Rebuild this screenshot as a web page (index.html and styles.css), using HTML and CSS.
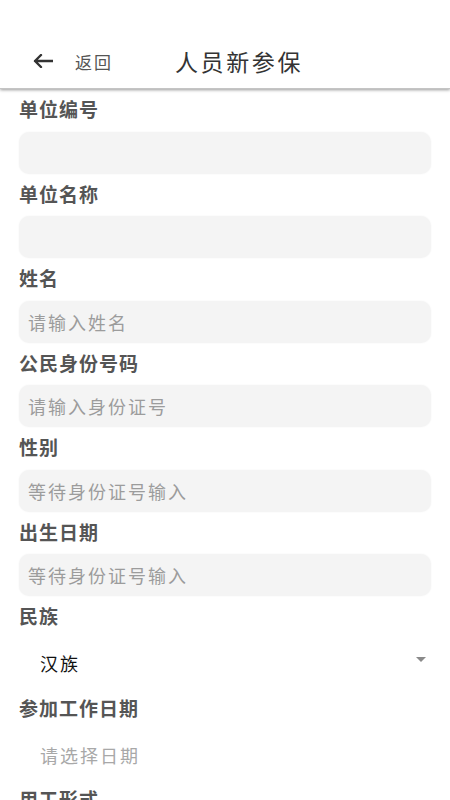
FILE: index.html
```html
<!DOCTYPE html>
<html lang="zh">
<head>
<meta charset="utf-8">
<title>人员新参保</title>
<link rel="stylesheet" href="styles.css">
</head>
<body>
<header class="topbar">
  <div class="back">
    <svg class="back-icon" width="20" height="14" viewBox="0 0 20 14"><path d="M19.5 7H2M8 1L2 7l6 6" fill="none" stroke="#333" stroke-width="2.4" stroke-linecap="round" stroke-linejoin="round"/></svg>
    <span class="back-text">返回</span>
  </div>
  <h1 class="title">人员新参保</h1>
</header>
<main class="form">
  <div class="label">单位编号</div>
  <div class="input"></div>
  <div class="label">单位名称</div>
  <div class="input"></div>
  <div class="label">姓名</div>
  <div class="input placeholder">请输入姓名</div>
  <div class="label">公民身份号码</div>
  <div class="input placeholder">请输入身份证号</div>
  <div class="label">性别</div>
  <div class="input placeholder">等待身份证号输入</div>
  <div class="label">出生日期</div>
  <div class="input placeholder">等待身份证号输入</div>
  <div class="label">民族</div>
  <div class="select">
    <span class="select-value">汉族</span>
    <span class="caret"></span>
  </div>
  <div class="label">参加工作日期</div>
  <div class="date">请选择日期</div>
  <div class="label">用工形式</div>
</main>
</body>
</html>
```

FILE: styles.css
```css
html, body {
  margin: 0;
  padding: 0;
  background: #fff;
}
body {
  font-family: "Noto Sans CJK SC", "Noto Sans", sans-serif;
  width: 450px;
  overflow: hidden;
}
.topbar {
  position: relative;
  z-index: 2;
  height: 89px;
  box-sizing: border-box;
  padding: 34px 0 0 33px;
  display: flex;
  align-items: center;
  background: #fff;
  box-shadow: 0 1px 3px rgba(0,0,0,0.4);
  border-bottom: 1px solid #c4c4c4;
}
.back {
  display: flex;
  align-items: center;
  width: 142px;
}
.back-icon {
  display: block;
}
.back-text {
  margin-left: 22px;
  font-size: 17px;
  letter-spacing: 2px;
  color: #555;
}
.title {
  margin: 0;
  font-size: 23px;
  font-weight: 400;
  letter-spacing: 2.6px;
  color: #333;
}
.form {
  padding: 0 19px;
  display: flex;
  flex-direction: column;
}
.label {
  height: 42.5px;
  box-sizing: border-box;
  padding-bottom: 3px;
  display: flex;
  align-items: center;
  font-size: 19px;
  font-weight: 700;
  letter-spacing: 1px;
  color: #555;
}
.input {
  height: 42px;
  box-sizing: border-box;
  border-radius: 10px;
  background: #f4f4f4;
  box-shadow: 0 0 2px rgba(0,0,0,0.05);
  padding-left: 9px;
  display: flex;
  align-items: center;
  font-size: 18px;
  letter-spacing: 2px;
}
.placeholder {
  color: #9c9c9c;
}
.select {
  height: 49.5px;
  display: flex;
  align-items: center;
  justify-content: space-between;
  padding: 0 5px 0 21px;
}
.select-value {
  font-size: 18px;
  letter-spacing: 2px;
  color: #111;
}
.caret {
  width: 0;
  height: 0;
  border-left: 5.5px solid transparent;
  border-right: 5.5px solid transparent;
  border-top: 5px solid #8a8a8a;
  margin-top: -8px;
}
.date {
  height: 48.5px;
  display: flex;
  align-items: center;
  padding-left: 21px;
  font-size: 18px;
  letter-spacing: 2px;
  color: #a8a8a8;
}
```
